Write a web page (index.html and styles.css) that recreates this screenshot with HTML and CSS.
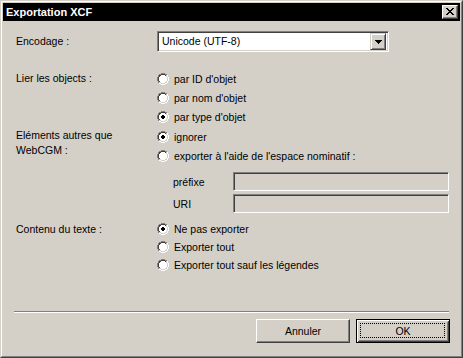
FILE: index.html
```html
<!DOCTYPE html>
<html lang="fr">
<head>
<meta charset="utf-8">
<title>Exportation XCF</title>
<link rel="stylesheet" href="styles.css">
</head>
<body>
<svg class="defs" width="0" height="0" aria-hidden="true">
  <defs>
    <g id="radio-base" shape-rendering="crispEdges">
      <path fill="#808080" d="M4 0h4v1h-4z M2 1h2v1h-2z M8 1h2v1h-2z M1 2h1v2h-1z M0 4h1v4h-1z M1 8h1v2h-1z"/>
      <path fill="#ffffff" d="M10 2h1v2h-1z M11 4h1v4h-1z M10 8h1v2h-1z M2 10h2v1h-2z M8 10h2v1h-2z M4 11h4v1h-4z"/>
      <path fill="#404040" d="M4 1h4v1h-4z M2 2h2v1h-2z M8 2h1v1h-1z M2 3h1v1h-1z M1 4h1v4h-1z M2 8h1v1h-1z"/>
      <path fill="#d4d0c8" d="M9 2h1v2h-1z M10 4h1v4h-1z M9 8h1v1h-1z M8 9h2v1h-2z M2 9h2v1h-2z M4 10h4v1h-4z"/>
      <path fill="#ffffff" d="M4 2h4v1h-4z M3 3h6v1h-6z M2 4h8v4h-8z M3 8h6v1h-6z M4 9h4v1h-4z"/>
    </g>
    <g id="radio-dot" shape-rendering="crispEdges">
      <path fill="#000000" d="M5 4h2v1h-2z M4 5h4v2h-4z M5 7h2v1h-2z"/>
    </g>
  </defs>
</svg>

<div class="window">
  <div class="frame">
    <div class="titlebar">
      <span class="title">Exportation XCF</span>
      <span class="close">
        <svg width="8" height="7" viewBox="0 0 8 7" shape-rendering="crispEdges">
          <path fill="#000" d="M0 0h2v1h-2z M6 0h2v1h-2z M1 1h2v1h-2z M5 1h2v1h-2z M2 2h4v1h-4z M3 3h2v1h-2z M2 4h4v1h-4z M1 5h2v1h-2z M5 5h2v1h-2z M0 6h2v1h-2z M6 6h2v1h-2z"/>
        </svg>
      </span>
    </div>

    <div class="content">
      <div class="row row-enc">
        <div class="lbl">Encodage :</div>
        <div class="combo">
          <span class="combo-text">Unicode (UTF-8)</span>
          <span class="combo-btn">
            <svg width="7" height="4" viewBox="0 0 7 4" shape-rendering="crispEdges">
              <path fill="#000" d="M0 0h7v1h-1v1h-1v1h-1v1h-1v-1h-1v-1h-1v-1h-1z"/>
            </svg>
          </span>
        </div>
      </div>

      <div class="row group g1">
        <div class="lbl lbl-top">Lier les objects :</div>
        <div class="opts">
          <div class="radio"><svg class="rb" viewBox="0 0 12 12"><use href="#radio-base"/></svg><span>par ID d'objet</span></div>
          <div class="radio"><svg class="rb" viewBox="0 0 12 12"><use href="#radio-base"/></svg><span>par nom d'objet</span></div>
          <div class="radio"><svg class="rb" viewBox="0 0 12 12"><use href="#radio-base"/><use href="#radio-dot"/></svg><span>par type d'objet</span></div>
        </div>
      </div>

      <div class="row group g2">
        <div class="lbl lbl-two">Eléments autres que<br>WebCGM :</div>
        <div class="opts">
          <div class="radio"><svg class="rb" viewBox="0 0 12 12"><use href="#radio-base"/><use href="#radio-dot"/></svg><span>ignorer</span></div>
          <div class="radio"><svg class="rb" viewBox="0 0 12 12"><use href="#radio-base"/></svg><span>exporter à l'aide de l'espace nominatif :</span></div>
          <div class="fields">
            <div class="field"><span class="field-lbl">préfixe</span><span class="edit"></span></div>
            <div class="field"><span class="field-lbl">URI</span><span class="edit"></span></div>
          </div>
        </div>
      </div>

      <div class="row group g3">
        <div class="lbl lbl-top">Contenu du texte :</div>
        <div class="opts">
          <div class="radio"><svg class="rb" viewBox="0 0 12 12"><use href="#radio-base"/><use href="#radio-dot"/></svg><span>Ne pas exporter</span></div>
          <div class="radio"><svg class="rb" viewBox="0 0 12 12"><use href="#radio-base"/></svg><span>Exporter tout</span></div>
          <div class="radio"><svg class="rb" viewBox="0 0 12 12"><use href="#radio-base"/></svg><span>Exporter tout sauf les légendes</span></div>
        </div>
      </div>

      <div class="sep"></div>

      <div class="buttons">
        <div class="btn">Annuler</div>
        <div class="btn btn-default"><span class="focus"></span>OK</div>
      </div>
    </div>
  </div>
</div>
</body>
</html>
```

FILE: styles.css
```css
* { box-sizing: border-box; }
html, body { margin: 0; padding: 0; }
body {
  width: 463px;
  height: 358px;
  overflow: hidden;
  background: #d4d0c8;
  font-family: "Liberation Sans", Arial, sans-serif;
  font-size: 10.5px;
  color: #000;
}
.defs { position: absolute; width: 0; height: 0; overflow: hidden; }

.window {
  width: 463px;
  height: 358px;
  background: #d4d0c8;
  border: 1px solid;
  border-color: #d4d0c8 #404040 #404040 #d4d0c8;
}
.frame {
  height: 100%;
  border: 1px solid;
  border-color: #ffffff #808080 #808080 #ffffff;
  padding: 1px;
  display: flex;
  flex-direction: column;
}

.titlebar {
  height: 18px;
  flex: none;
  background: #000;
  color: #fff;
  display: flex;
  align-items: center;
  padding: 0 2px 0 3px;
}
.title {
  flex: 1;
  font-weight: bold;
  font-size: 11px;
  line-height: 18px;
}
.close {
  width: 16px;
  height: 14px;
  background: #d4d0c8;
  border: 1px solid;
  border-color: #ffffff #404040 #404040 #ffffff;
  box-shadow: inset -1px -1px 0 #808080, inset 1px 1px 0 #d4d0c8;
  display: flex;
  align-items: center;
  justify-content: center;
  padding-bottom: 1px;
}
.close svg { display: block; }

.content {
  flex: 1;
  display: flex;
  flex-direction: column;
  padding: 10px 10px 0 13px;
}

.row {
  display: grid;
  grid-template-columns: 141px 1fr;
}
.lbl { white-space: nowrap; }

.row-enc { height: 21px; align-items: center; }
.row-enc .lbl { line-height: 21px; }

.combo {
  width: 232px;
  height: 21px;
  background: #fff;
  border: 1px solid;
  border-color: #808080 #ffffff #ffffff #808080;
  box-shadow: inset 1px 1px 0 #404040, inset -1px -1px 0 #d4d0c8;
  padding: 2px;
  display: flex;
  align-items: center;
}
.combo-text {
  flex: 1;
  padding-left: 2px;
  line-height: 17px;
}
.combo-btn {
  width: 16px;
  height: 17px;
  background: #d4d0c8;
  border: 1px solid;
  border-color: #d4d0c8 #404040 #404040 #d4d0c8;
  box-shadow: inset 1px 1px 0 #ffffff, inset -1px -1px 0 #808080;
  display: flex;
  align-items: center;
  justify-content: center;
  padding-left: 1px;
}
.combo-btn svg { display: block; }

.g1 { margin-top: 17px; }
.g2 { margin-top: 1px; }
.g3 { margin-top: 7px; }

.g1 .radio { height: 19px; }
.g2 .radio { height: 19px; }
.g3 .radio { height: 18px; }
.g1 .lbl-top { line-height: 19px; }
.g3 .lbl-top { line-height: 18px; }
.lbl-two { line-height: 15px; padding-top: 1px; }

.radio {
  display: flex;
  align-items: center;
  white-space: nowrap;
}
.rb {
  width: 12px;
  height: 12px;
  flex: none;
  margin-right: 5px;
  display: block;
}

.fields {
  margin-top: 7px;
  display: flex;
  flex-direction: column;
  gap: 3px;
}
.field {
  display: flex;
  align-items: center;
  height: 19px;
  padding-left: 16px;
}
.field-lbl { width: 60px; }
.edit {
  width: 216px;
  height: 19px;
  background: #d4d0c8;
  border: 1px solid;
  border-color: #808080 #ffffff #ffffff #808080;
  box-shadow: inset 1px 1px 0 #404040, inset -1px -1px 0 #d4d0c8;
}

.sep {
  margin-top: 37px;
  margin-left: -2px;
  width: 435px;
  height: 2px;
  border-top: 1px solid #808080;
  border-bottom: 1px solid #ffffff;
}

.buttons {
  margin-top: 6px;
  display: flex;
  justify-content: flex-end;
  gap: 6px;
}
.btn {
  position: relative;
  width: 94px;
  height: 24px;
  background: #d4d0c8;
  border: 1px solid;
  border-color: #ffffff #404040 #404040 #ffffff;
  box-shadow: inset -1px -1px 0 #808080, inset 1px 1px 0 #d4d0c8;
  display: flex;
  align-items: center;
  justify-content: center;
  line-height: 22px;
}
.btn-default {
  border: 1px solid #000;
  box-shadow: inset 1px 1px 0 #ffffff, inset -1px -1px 0 #404040, inset 2px 2px 0 #d4d0c8, inset -2px -2px 0 #808080;
}
.focus {
  position: absolute;
  left: 3px;
  top: 3px;
  right: 4px;
  bottom: 4px;
  border: 1px dotted #000;
}
```
